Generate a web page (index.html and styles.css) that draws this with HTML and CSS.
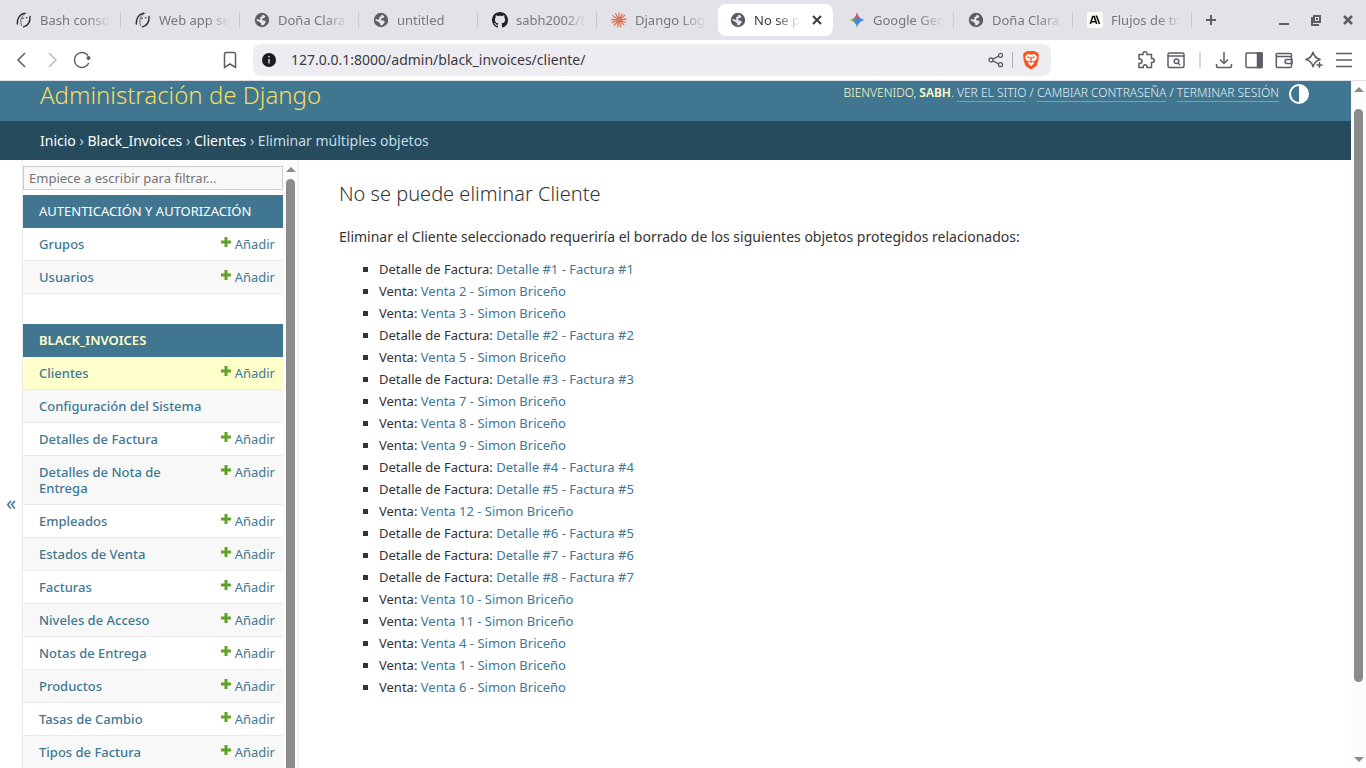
FILE: index.html
```html
<!DOCTYPE html>
<html lang="es">
<head>
<meta charset="utf-8">
<title>No se puede eliminar Cliente</title>
<link rel="stylesheet" href="styles.css">
</head>
<body>
<svg class="defs" aria-hidden="true">
  <symbol id="globe" viewBox="0 0 16 16">
    <circle cx="8" cy="8" r="7.200" fill="#5c5e66"/>
    <path d="M8.600 2.600 11.500 4.300 10.200 6 8.100 6.600 8.300 8.300 11 8.700 11.800 10.200 9.600 13 7.300 13.400 7.200 11.400 5.600 10.100 2.600 8.400 2.700 7 5.500 7.800 6.600 6.900 5.900 5.200 8 4.400Z" fill="#e8e7ec"/>
  </symbol>
  <symbol id="anaconda" viewBox="0 0 16 16">
    <g fill="none" stroke="#2d2d2f" stroke-linecap="round"><path d="M8.500 1.300C4 2 .8 6.500 1.300 12M7.500 14.900c4-.7 7-4.900 6.500-10.400" stroke-width="1.400"/><path d="M5.500 13.500c-1-3-1-6.500.7-9 1-1.700 2.300-2.800 3.800-3.300" stroke-width=".7"/></g>
    <circle cx="7" cy="6.200" r=".8" fill="#2d2d2f"/><circle cx="10.700" cy="5.800" r=".8" fill="#2d2d2f"/>
  </symbol>
  <symbol id="plus" viewBox="0 0 12 12"><path d="M4.500 1h3v3.500H11v3H7.500V11h-3V7.500H1v-3h3.500z" fill="#5fa225"/></symbol>
</svg>

<nav class="tabs" aria-label="Pestañas">
  <button class="tab"><svg class="fav"><use href="#anaconda"/></svg><span class="tab-name">Bash console</span></button>
  <button class="tab"><svg class="fav"><use href="#anaconda"/></svg><span class="tab-name">Web app setup</span></button>
  <button class="tab"><svg class="fav"><use href="#globe"/></svg><span class="tab-name">Doña Clara</span></button>
  <button class="tab"><svg class="fav"><use href="#globe"/></svg><span class="tab-name">untitled</span></button>
  <button class="tab"><svg class="fav" viewBox="0 0 16 16"><path fill="#1f2328" d="M8 0C3.580 0 0 3.580 0 8c0 3.540 2.290 6.530 5.470 7.590.4.070.55-.17.55-.38 0-.19-.01-.82-.01-1.490-2.010.37-2.530-.49-2.690-.94-.09-.23-.48-.94-.82-1.130-.28-.15-.68-.52-.01-.53.63-.01 1.080.58 1.230.82.72 1.210 1.870.87 2.330.66.07-.52.28-.87.51-1.070-1.780-.2-3.640-.89-3.640-3.950 0-.87.31-1.590.82-2.150-.08-.2-.36-1.020.08-2.120 0 0 .67-.21 2.200.82.64-.18 1.320-.27 2-.27s1.360.09 2 .27c1.530-1.040 2.200-.82 2.200-.82.44 1.100.16 1.920.08 2.120.51.56.82 1.270.82 2.150 0 3.070-1.870 3.750-3.650 3.950.29.25.54.73.54 1.480 0 1.070-.01 1.930-.01 2.200 0 .21.15.46.55.38A8.010 8.010 0 0 0 16 8c0-4.420-3.580-8-8-8z"/></svg><span class="tab-name">sabh2002/Django</span></button>
  <button class="tab plain"><svg class="fav" viewBox="0 0 16 16"><path fill="none" stroke="#d97757" stroke-width="1.300" d="M8 8 8 .5M8 8l3.500-6.500M8 8l6-5M8 8l7.500-1M8 8l7 2.500M8 8l5.200 5M8 8l2 7.300M8 8l-1.500 7.500M8 8l-5 5.500M8 8l-7.200 2.700M8 8 .3 7.500M8 8 1.500 3.500M8 8 4.500 1.300"/></svg><span class="tab-name">Django Login</span></button>
  <div class="tab plain active"><svg class="fav"><use href="#globe"/></svg><span class="tab-name">No se puede</span><button class="close" aria-label="Cerrar"><svg viewBox="0 0 10 10"><path d="m1 1 8 8m0-8-8 8"/></svg></button></div>
  <button class="tab"><svg class="fav" viewBox="0 0 16 16"><defs><linearGradient id="gem"><stop offset="0" stop-color="#fbbc04"/><stop offset=".3" stop-color="#5aa469"/><stop offset=".5" stop-color="#4285f4"/><stop offset="1" stop-color="#3186ff"/></linearGradient></defs><path fill="url(#gem)" d="M8 .5C8.800 4.500 11.500 7.200 15.500 8 11.500 8.800 8.800 11.500 8 15.500 7.200 11.500 4.500 8.800.5 8 4.500 7.200 7.200 4.500 8 .5z"/><path d="M8 .5c.5 2.500 1.600 4.400 3.200 5.700L7 6.500 6 5.500C7 4 7.700 2.300 8 .5z" fill="#ee4d5d"/></svg><span class="tab-name">Google Gemini</span></button>
  <button class="tab"><svg class="fav"><use href="#globe"/></svg><span class="tab-name">Doña Clara</span></button>
  <button class="tab"><svg class="fav" viewBox="0 0 16 16"><rect width="16" height="16" rx="2" fill="#fafaf7"/><path d="m3.300 12 2.500-7.500h1.400L9.700 12M4.800 9.700h3.600M8.700 4.300h1l2.800 7.700" fill="none" stroke="#111" stroke-width="1.600"/></svg><span class="tab-name">Flujos de trabajo</span></button>
  <button class="new-tab" aria-label="Nueva pestaña"><svg viewBox="0 0 12 12"><path d="M6 1v10M1 6h10"/></svg></button>
  <div class="window-buttons">
    <button aria-label="Minimizar"><svg viewBox="0 0 12 12"><path d="M1 10h10" stroke-width="2"/></svg></button>
    <button aria-label="Restaurar"><svg viewBox="0 0 12 12"><path d="M4 2h6v6H4zM2 3v8h7M7 4v2" stroke-width="2"/></svg></button>
    <button aria-label="Cerrar ventana"><svg viewBox="0 0 12 12"><path d="m2 2 8 8m0-8-8 8" stroke-width="2.500"/></svg></button>
  </div>
</nav>

<div class="toolbar">
  <div class="nav-buttons">
    <button aria-label="Atrás"><svg viewBox="0 0 20 20"><path d="m13 3-7 7 7 7"/></svg></button>
    <button class="off" aria-label="Adelante"><svg viewBox="0 0 20 20"><path d="m7 3 7 7-7 7"/></svg></button>
    <button aria-label="Recargar"><svg viewBox="0 0 20 20"><path d="M16.800 13A7.500 7.500 0 1 1 16 5.500"/><circle cx="16.500" cy="8" r="2" fill="#5c5e66" stroke="none"/></svg></button>
  </div>
  <button class="bookmark" aria-label="Marcador"><svg viewBox="0 0 20 20"><path d="M4.500 4A1.500 1.500 0 0 1 6 2.500h8A1.500 1.500 0 0 1 15.500 4v13.500L10 14l-5.500 3.500z"/></svg></button>
  <div class="address">
    <svg class="info" viewBox="0 0 16 16"><circle cx="8" cy="8" r="7" fill="#1d1b24"/><path d="M8 7v4.500M8 4v1.500" stroke="#d4d3da" stroke-width="1.500"/></svg>
    <input type="text" aria-label="Dirección" value="127.0.0.1:8000/admin/black_invoices/cliente/">
    <button aria-label="Compartir"><svg class="share" viewBox="0 0 16 16"><circle cx="3" cy="8" r="2"/><circle cx="12.500" cy="3.300" r="2"/><circle cx="12.500" cy="12.700" r="2"/><path d="m4.800 7.100 5.900-2.900M4.800 8.900l5.900 2.900"/></svg></button>
    <span class="bar"></span>
    <button aria-label="Brave Shields"><svg class="brave" viewBox="0 0 18 20"><path d="M5 1h8l1.500 1.500 1.200-.2L17 5l-.5 2 .2 2-2.200 7L9 19.500 3.500 16 1.300 9l.2-2L1 5l1.300-2.700 1.200.2z" fill="#fb5420"/><path d="M5.500 4 9 4.800 12.500 4l2.500 3-1 3-3 1.500 1 2L9 16l-3-2.500 1-2L4 10 3 7z" fill="#fff"/><path d="m5.500 7 2 .7M12.500 7l-2 .7M9 7v3.500M7.500 11 9 12l1.500-1" fill="none" stroke="#fb5420"/></svg></button>
  </div>
  <div class="tools">
    <button aria-label="Extensiones"><svg viewBox="0 0 20 20"><path d="M3 4.500h4V3.800a2 2 0 1 1 4 0v.7h4.500v4h.8a2 2 0 1 1 0 4h-.8v5H11v-.8a1.900 1.900 0 1 0-3.800 0v.8H3v-4h.8a2.200 2.200 0 1 0 0-4.400H3z"/></svg></button>
    <button aria-label="Buscar en la página"><svg viewBox="0 0 20 20"><rect x="2" y="3" width="16" height="14.500" rx="1.500"/><path d="M2 6h16M12 13l2 2"/><circle cx="10.500" cy="11.300" r="2.300"/></svg></button>
    <span class="bar light"></span>
    <button aria-label="Descargas"><svg viewBox="0 0 20 20"><path d="M10 2v11M6 9.500l4 4 4-4M2.500 14v2A1.500 1.500 0 0 0 4 17.500h12a1.500 1.500 0 0 0 1.500-1.500v-2"/></svg></button>
    <button aria-label="Panel lateral"><svg viewBox="0 0 20 20"><rect x="2" y="3" width="16" height="14.500" rx="1"/><path d="M13.500 3H18v14.500h-4.500z" fill="#5c5e66"/></svg></button>
    <button aria-label="Cartera"><svg viewBox="0 0 20 20"><path d="M17.500 6.500V5A1.500 1.500 0 0 0 16 3.500H3.500a1.500 1.500 0 0 0 0 3H16a1.500 1.500 0 0 1 1.500 1.500v8a1.500 1.500 0 0 1-1.500 1.500H4A1.500 1.500 0 0 1 2.300 16V5M18 9.500h-5a2 2 0 0 0 0 4h5z"/></svg></button>
    <button aria-label="Leo"><svg viewBox="0 0 20 20"><path d="M9 2c.8 4 3 6.500 7.500 7.500-2.300.6-4 1.500-5.200 2.900C10.200 13.600 9.500 15 9 17 8.200 13 5.800 10.300 1.500 9.500 5.800 8.500 8.200 6 9 2zM15.500 12v6M12.500 15h6"/></svg></button>
    <button aria-label="Menú"><svg viewBox="0 0 20 20"><path d="M2 3.500h16M2 10h16M2 16.500h16"/></svg></button>
  </div>
</div>

<div class="view">
  <div class="page">
    <header class="site-header">
      <div class="site-name"><a href="#">Administración de Django</a></div>
      <div class="user-tools">
        <span>Bienvenido, <strong>sabh</strong>. <a href="#">Ver el sitio</a> / <a href="#">Cambiar contraseña</a> / <a href="#">Terminar sesión</a></span>
        <button class="theme" aria-label="Cambiar tema"><svg viewBox="0 0 20 20"><circle cx="10" cy="10" r="9" fill="none" stroke="#fff" stroke-width="2"/><path d="M10 1a9 9 0 0 1 0 18z" fill="#fff"/></svg></button>
      </div>
    </header>
    <nav class="breadcrumbs"><a href="#">Inicio</a> › <a href="#">Black_Invoices</a> › <a href="#">Clientes</a> › Eliminar múltiples objetos</nav>
    <div class="main">
      <button class="toggle" aria-label="Alternar barra">«</button>
      <aside class="sidebar">
        <div class="side-list">
          <input class="filter" type="search" placeholder="Empiece a escribir para filtrar..." aria-label="Filtrar">
          <table class="module">
            <caption><a href="#">Autenticación y autorización</a></caption>
            <tr><th><a href="#">Grupos</a></th><td><a href="#"><svg class="add"><use href="#plus"/></svg>Añadir</a></td></tr>
            <tr><th><a href="#">Usuarios</a></th><td><a href="#"><svg class="add"><use href="#plus"/></svg>Añadir</a></td></tr>
          </table>
          <table class="module">
            <caption class="current"><a href="#">Black_Invoices</a></caption>
            <tr class="selected"><th><a href="#">Clientes</a></th><td><a href="#"><svg class="add"><use href="#plus"/></svg>Añadir</a></td></tr>
            <tr><th colspan="2"><a href="#">Configuración del Sistema</a></th></tr>
            <tr><th><a href="#">Detalles de Factura</a></th><td><a href="#"><svg class="add"><use href="#plus"/></svg>Añadir</a></td></tr>
            <tr><th><a href="#">Detalles de Nota de Entrega</a></th><td><a href="#"><svg class="add"><use href="#plus"/></svg>Añadir</a></td></tr>
            <tr><th><a href="#">Empleados</a></th><td><a href="#"><svg class="add"><use href="#plus"/></svg>Añadir</a></td></tr>
            <tr><th><a href="#">Estados de Venta</a></th><td><a href="#"><svg class="add"><use href="#plus"/></svg>Añadir</a></td></tr>
            <tr><th><a href="#">Facturas</a></th><td><a href="#"><svg class="add"><use href="#plus"/></svg>Añadir</a></td></tr>
            <tr><th><a href="#">Niveles de Acceso</a></th><td><a href="#"><svg class="add"><use href="#plus"/></svg>Añadir</a></td></tr>
            <tr><th><a href="#">Notas de Entrega</a></th><td><a href="#"><svg class="add"><use href="#plus"/></svg>Añadir</a></td></tr>
            <tr><th><a href="#">Productos</a></th><td><a href="#"><svg class="add"><use href="#plus"/></svg>Añadir</a></td></tr>
            <tr><th><a href="#">Tasas de Cambio</a></th><td><a href="#"><svg class="add"><use href="#plus"/></svg>Añadir</a></td></tr>
            <tr><th><a href="#">Tipos de Factura</a></th><td><a href="#"><svg class="add"><use href="#plus"/></svg>Añadir</a></td></tr>
          </table>
        </div>
        <div class="scroll side-scroll"><span class="arrow-up"></span><span class="thumb"></span></div>
      </aside>
      <main class="content">
        <h1>No se puede eliminar Cliente</h1>
        <p>Eliminar el Cliente seleccionado requeriría el borrado de los siguientes objetos protegidos relacionados:</p>
        <ul>
          <li>Detalle de Factura: <a href="#">Detalle #1 - Factura #1</a></li>
          <li>Venta: <a href="#">Venta 2 - Simon Briceño</a></li>
          <li>Venta: <a href="#">Venta 3 - Simon Briceño</a></li>
          <li>Detalle de Factura: <a href="#">Detalle #2 - Factura #2</a></li>
          <li>Venta: <a href="#">Venta 5 - Simon Briceño</a></li>
          <li>Detalle de Factura: <a href="#">Detalle #3 - Factura #3</a></li>
          <li>Venta: <a href="#">Venta 7 - Simon Briceño</a></li>
          <li>Venta: <a href="#">Venta 8 - Simon Briceño</a></li>
          <li>Venta: <a href="#">Venta 9 - Simon Briceño</a></li>
          <li>Detalle de Factura: <a href="#">Detalle #4 - Factura #4</a></li>
          <li>Detalle de Factura: <a href="#">Detalle #5 - Factura #5</a></li>
          <li>Venta: <a href="#">Venta 12 - Simon Briceño</a></li>
          <li>Detalle de Factura: <a href="#">Detalle #6 - Factura #5</a></li>
          <li>Detalle de Factura: <a href="#">Detalle #7 - Factura #6</a></li>
          <li>Detalle de Factura: <a href="#">Detalle #8 - Factura #7</a></li>
          <li>Venta: <a href="#">Venta 10 - Simon Briceño</a></li>
          <li>Venta: <a href="#">Venta 11 - Simon Briceño</a></li>
          <li>Venta: <a href="#">Venta 4 - Simon Briceño</a></li>
          <li>Venta: <a href="#">Venta 1 - Simon Briceño</a></li>
          <li>Venta: <a href="#">Venta 6 - Simon Briceño</a></li>
        </ul>
      </main>
    </div>
  </div>
  <div class="scroll"><span class="arrow-up"></span><span class="thumb"></span><span class="rest"></span><span class="arrow-down"></span></div>
</div>
</body>
</html>
```

FILE: styles.css
```css
* { box-sizing: border-box; }
body {
  margin: 0;
  height: 100vh;
  display: flex;
  flex-direction: column;
  overflow: hidden;
  background: #fff;
  color: #333;
  font-family: "Noto Sans", sans-serif;
  font-size: 14px;
}
button { padding: 0; border: 0; background: none; color: inherit; font: inherit; }
button svg { display: block; }
a { color: #417893; text-decoration: none; }
.defs { display: none; }

/* Tab strip */
.tabs { flex: none; display: flex; height: 40px; padding-left: 2px; background: #e3e2e8; color: #77777d; font-size: 13px; }
.tab {
  flex: 0 1 119px;
  min-width: 0;
  display: flex;
  align-items: center;
  gap: 8px;
  padding: 0 10px 0 14px;
  text-align: left;
  background: linear-gradient(#c9c8cf, #c9c8cf) right center / 1px 16px no-repeat;
}
.tab.plain { background: none; }
.fav { flex: none; width: 16px; height: 16px; }
.tab-name {
  flex: 1;
  min-width: 0;
  overflow: hidden;
  white-space: nowrap;
  -webkit-mask-image: linear-gradient(to left, transparent, #000 24px);
  mask-image: linear-gradient(to left, transparent, #000 24px);
}
.tab.active { flex-basis: 115px; margin: 4px 2px; padding: 0 11px 0 12px; border-radius: 8px; background: #fff; color: #3b3b41; }
.close { width: 10px; margin-left: 4px; }
.close svg { width: 10px; stroke: #3b3b41; stroke-width: 2; }
.new-tab { width: 36px; padding-left: 13px; }
.new-tab svg { width: 12px; stroke: #5c5e66; stroke-width: 2; }
.window-buttons { display: flex; align-items: center; gap: 20px; margin-left: auto; padding-right: 12px; }
.window-buttons svg { width: 12px; fill: none; stroke: #5c5e66; }

/* Toolbar */
.toolbar { flex: none; display: flex; align-items: center; height: 41px; padding: 0 12px; border-bottom: 1px solid #dfdee5; }
.toolbar button svg { width: 20px; height: 20px; fill: none; stroke: #5c5e66; stroke-width: 1.5; }
.nav-buttons { display: flex; gap: 10px; }
.nav-buttons .off { opacity: .4; }
.bookmark { margin: 0 13px 0 128px; }
.address { flex: 1; max-width: 798px; display: flex; align-items: center; height: 32px; padding: 0 10px 0 8px; border-radius: 8px; background: #edecf1; }
.info { flex: none; width: 16px; height: 16px; }
.address input { flex: 1; min-width: 0; height: 20px; padding: 0 0 1px; margin-left: 14px; border: 0; outline: 0; background: none; color: #3a393f; font: inherit; }
.toolbar button .share { width: 16px; height: 16px; stroke-width: 1.3; }
.toolbar button .brave { width: 20px; stroke: none; }
.bar { width: 1px; height: 16px; margin: 0 8px; background: #aeadb5; }
.bar.light { width: 2px; margin: 0; background: #d8d7de; }
.tools { display: flex; align-items: center; gap: 10px; margin-left: auto; }
.tools .bar { margin: 0 3px; }

/* Viewport */
.view { flex: 1; min-height: 0; display: flex; }
.page { flex: 1; min-width: 0; display: flex; flex-direction: column; }
.site-header { flex: none; display: flex; justify-content: space-between; padding: 0 40px 12px; background: #417690; color: #ffc; }
.site-name { font-size: 24px; font-weight: 300; line-height: 28px; }
.site-name a { color: #f5dd5d; }
.user-tools { display: flex; align-items: flex-start; gap: 10px; font-size: 12px; font-weight: 300; line-height: 24px; text-transform: uppercase; }
.user-tools a { border-bottom: 1px solid rgba(255, 255, 255, .3); color: #e4eff5; }
.user-tools strong { font-weight: 600; }
.theme { margin: 3px 2px 0 0; }
.theme svg { width: 20px; height: 20px; }
.breadcrumbs { flex: none; padding: 10px 40px; background: #264b5d; color: #c4dce8; line-height: 19px; }
.breadcrumbs a { color: #fff; }
.main { flex: 1; min-height: 0; display: flex; }

/* Sidebar */
.toggle { flex: none; width: 23px; border-right: 1px solid #eaeaea; color: #417690; font-size: 20px; padding-top: 76px; }
.sidebar { flex: none; width: 276px; display: flex; border-right: 1px solid #eaeaea; overflow: hidden; }
.side-list { flex: 1; min-width: 0; padding-top: 6px; }
.filter { display: block; width: 100%; height: 24px; margin-bottom: 5px; padding: 0 5px; border: 1px solid #ccc; background: #f8f8f8; font: inherit; font-size: 13px; }
.filter::placeholder { color: #757575; }
.module { width: 100%; margin-bottom: 30px; border-collapse: collapse; font-size: 13px; line-height: 16px; }
.module caption { padding: 8px 16px; background: #417690; text-align: left; text-transform: uppercase; line-height: 17px; }
.module caption a { color: #fff; }
.module caption.current a { color: #ffc; font-weight: 600; }
.module th, .module td { padding: 8px; border-bottom: 1px solid #eaeaea; vertical-align: top; text-align: left; }
.module th { padding-left: 16px; font-weight: 500; }
.module td { white-space: nowrap; text-align: right; }
.module tr:nth-child(even) { background: #f8f8f8; }
.module .selected { background: #ffc; }
.add { width: 12px; height: 12px; margin-right: 3px; vertical-align: 1px; }

/* Scroll bars */
.scroll { flex: none; width: 15px; display: flex; flex-direction: column; align-items: center; padding: 6px 0; background: #fcfcfc; }
.thumb { flex: 100; width: 9px; margin-top: 17px; border-radius: 5px; background: #8b8b8b; }
.rest { flex: 13; }
.arrow-up, .arrow-down { border: 5px solid transparent; }
.arrow-up { border-top: 0; border-bottom-color: #8b8b8b; }
.arrow-down { border-bottom: 0; border-top-color: #8b8b8b; }
.side-scroll { padding: 7px 0 0; }
.side-scroll .thumb { margin: 7px 0 -8px; }

/* Content */
.content { flex: 1; min-width: 0; padding: 20px 40px; }
.content h1 { margin: 0 0 20px; font-size: 20px; font-weight: 300; line-height: 28px; }
.content p { margin: 0 0 12px; line-height: 18px; }
.content ul { margin: 0; padding-left: 40px; list-style: square; font-size: 13px; line-height: 22px; }
```
